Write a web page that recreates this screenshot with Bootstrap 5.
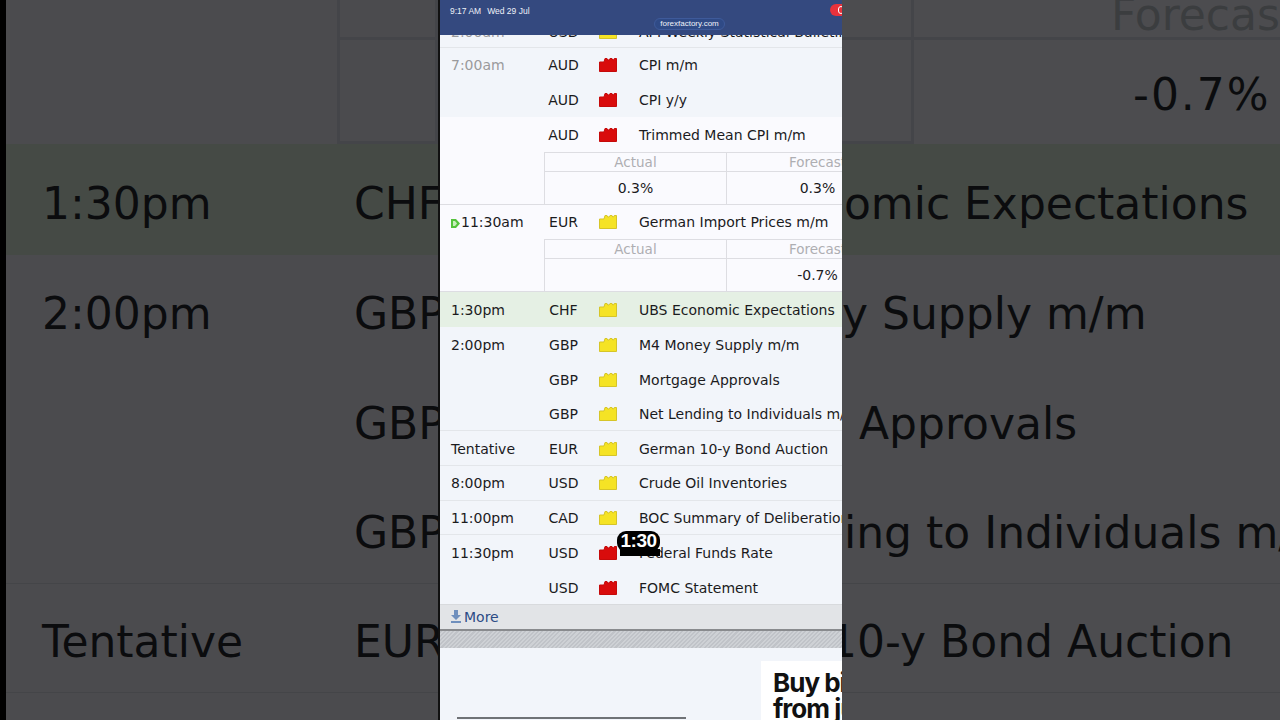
<!DOCTYPE html>
<html lang="en">

<head>
    <meta charset="UTF-8">
    <meta name="viewport" content="width=device-width, initial-scale=1.0">
    <title>Forex Factory calendar</title>
    <link href="https://cdn.jsdelivr.net/npm/bootstrap@5.3.0/dist/css/bootstrap.min.css" rel="stylesheet">
    <style>
        html, body { height: 720px; overflow: hidden; background: #000; }
        body { font-family: "DejaVu Sans", Verdana, sans-serif; }

        .stage { width: 1280px; height: 720px; }

        /* blurred, zoomed copy either side of the phone */
        .side { height: 720px; flex: none; overflow: hidden; background: #4b4b4e; color: #0b0c0e; font-size: 44px; line-height: 1; white-space: nowrap; }
        .side-left { width: 432px; margin-left: 6px; }
        .side-right { width: 438px; background: #4c4c4f; }
        .side-top { height: 144px; }
        .side-row { height: 109.5px; padding-top: 9px; }
        .side-green { height: 111px; padding-top: 9px; background: #454a45; }
        .side-line { border-bottom: 1px solid #444548; }
        .side-cell { border: 3px solid #444549; border-top: 0; flex: none; }
        .side-cell-left { width: 101px; height: 144px; margin-left: 331px; }
        .side-rule { height: 40px; border-bottom: 3px solid #444549; }
        .side-time { width: 348px; padding-left: 36px; flex: none; }
        .side-cell-a { width: 72px; border-left: 0; }
        .side-head { color: #3b3d3f; padding-left: 197px; margin-top: -7px; height: 47px; border-bottom: 3px solid #444549; }
        .side-val { padding-left: 219px; padding-top: 33px; letter-spacing: 2px; }
        .shift-expect { margin-left: -26px; }
        .shift-approv { margin-left: 17px; }
        .shift-lend { margin-left: 2px; }
        .shift-bond { margin-left: -13px; }

        /* phone */
        .phone { width: 404px; height: 720px; flex: none; overflow: hidden; background: #f2f5fa; border-left: 2px solid #111; font-size: 14px; color: #1b1b1d; position: relative; }
        .topbar { height: 35px; background: #34497f; color: #eef1f8; font-family: "Liberation Sans", Arial, sans-serif; font-size: 8.5px; position: absolute; top: 0; left: 0; right: 0; z-index: 2; }
        .status { padding: 5px 0 0 10px; gap: 6px; }
        .rec-pill { position: absolute; top: 4px; left: 390px; width: 24px; height: 12px; border-radius: 6px; background: #e8323c; }
        .rec-pill span { position: absolute; left: 8px; top: 2px; width: 6px; height: 8px; border: 1.5px solid #fff; border-radius: 3px; }
        .url-pill { position: absolute; top: 18px; left: 214px; width: 71px; height: 12px; border-radius: 6px; background: #2f4a86; border: 1px solid #3e5a9a; font-size: 8px; line-height: 10px; text-align: center; }

        .cal-row { height: 34.7px; padding-top: 2px; align-items: center; white-space: nowrap; }
        .cal-first { height: 47.5px; padding-top: 18px; border-bottom: 1px solid #e3e6ea; }
        .cal-white { background: #fafafe; }
        .cal-green { background: #e5f0e4; height: 35px; }
        .cal-ruled { border-bottom: 1px solid #e3e6ea; }
        .col-time { width: 105px; padding-left: 11px; flex: none; }
        .col-cur { width: 37px; flex: none; text-align: center; }
        .col-imp { width: 52px; flex: none; text-align: center; line-height: 0; margin-top: -2px; }
        .col-name { padding-left: 5px; }
        .time-past { color: #9a9a9c; }
        .time-next { position: relative; padding-left: 21px; }
        .next-mark { position: absolute; left: 11px; top: 50%; margin-top: -4px; }

        .impact-red { fill: #d90c0c; stroke: #c50a0a; }
        .impact-yellow { fill: #f5e325; stroke: #d6c528; }

        .detail-wrap { background: #fafafe; padding-left: 104px; height: 53px; border-bottom: 1px solid #dddde2; }
        .detail-box { width: 364px; height: 53px; border: solid #dddde2; border-width: 1.5px 0 0 0; }
        .detail-cell { width: 182px; flex: none; border-left: 1.5px solid #dddde2; text-align: center; }
        .detail-head { height: 19px; line-height: 18px; font-size: 13.5px; color: #aeaeb2; border-bottom: 1.5px solid #dddde2; }
        .detail-val { height: 33px; line-height: 33px; }

        .more-bar { height: 27px; margin-top: -.7px; background: #e2e4e7; border-top: 1px solid #d8dadd; border-bottom: 2px solid #898b8e; padding-left: 11px; color: #2c4b85; line-height: 25px; gap: 3px; }
        .hatch { height: 17px; background: repeating-linear-gradient(135deg, #c0c3c8 0 1.5px, #ced1d5 1.5px 3px); }
        .below { height: 72px; position: relative; }
        .ad-box { position: absolute; left: 321px; top: 13px; width: 90px; height: 70px; background: #fff; padding: 9px 0 0 12px; color: #111; font-family: Inter, "Liberation Sans", sans-serif; font-weight: 700; font-size: 26px; line-height: 25.5px; letter-spacing: -1px; white-space: nowrap; }
        .ad-rule { position: absolute; left: 17px; top: 69px; width: 229px; height: 2px; background: #6f7276; }

        .timer-tag { position: absolute; left: 177px; top: 531px; width: 43px; height: 21px; border-radius: 9px; background: #000; color: #fff; font-family: "Liberation Sans", Arial, sans-serif; font-weight: 700; font-size: 19px; line-height: 20px; letter-spacing: -.5px; text-align: center; z-index: 3; }
        .timer-tag::after { content: ""; position: absolute; left: 3px; top: 18px; width: 40px; height: 7px; background: #000; z-index: -1; }
    </style>
</head>

<body>
    <svg width="0" height="0" class="position-absolute">
        <symbol id="folder" viewBox="0 0 18 15">
            <path d="M.5 5 H5 L6 1.5 H8 L8.7 3 H10 L11 1.5 H13 L13.7 3 H14.5 L15.3 1.5 H17.5 V14.5 H.5 Z"/>
        </symbol>
    </svg>

    <div class="stage d-flex">
        <!-- left side -->
        <div class="side side-left">
            <div class="side-top">
                <div class="side-cell side-cell-left"><div class="side-rule"></div></div>
            </div>
            <div class="side-green d-flex align-items-center"><div class="side-time">1:30pm</div><div>CHF</div></div>
            <div class="side-row d-flex align-items-center"><div class="side-time">2:00pm</div><div>GBP</div></div>
            <div class="side-row d-flex align-items-center"><div class="side-time"></div><div>GBP</div></div>
            <div class="side-row side-line d-flex align-items-center"><div class="side-time"></div><div>GBP</div></div>
            <div class="side-row side-line d-flex align-items-center"><div class="side-time">Tentative</div><div>EUR</div></div>
        </div>

        <!-- phone -->
        <div class="phone">
            <div class="topbar">
                <div class="status d-flex"><span>9:17 AM</span><span>Wed 29 Jul</span></div>
                <div class="rec-pill"><span></span></div>
                <div class="url-pill">forexfactory.com</div>
            </div>

            <div class="cal-row cal-first d-flex">
                <div class="col-time time-past">2:00am</div>
                <div class="col-cur">USD</div>
                <div class="col-imp"><svg width="18" height="15" class="impact-yellow"><use href="#folder"/></svg></div>
                <div class="col-name">API Weekly Statistical Bulletin</div>
            </div>
            <div class="cal-row d-flex">
                <div class="col-time time-past">7:00am</div>
                <div class="col-cur">AUD</div>
                <div class="col-imp"><svg width="18" height="15" class="impact-red"><use href="#folder"/></svg></div>
                <div class="col-name">CPI m/m</div>
            </div>
            <div class="cal-row d-flex">
                <div class="col-time"></div>
                <div class="col-cur">AUD</div>
                <div class="col-imp"><svg width="18" height="15" class="impact-red"><use href="#folder"/></svg></div>
                <div class="col-name">CPI y/y</div>
            </div>
            <div class="cal-row cal-white d-flex">
                <div class="col-time"></div>
                <div class="col-cur">AUD</div>
                <div class="col-imp"><svg width="18" height="15" class="impact-red"><use href="#folder"/></svg></div>
                <div class="col-name">Trimmed Mean CPI m/m</div>
            </div>
            <div class="detail-wrap">
                <div class="detail-box">
                    <div class="d-flex detail-head">
                        <div class="detail-cell">Actual</div>
                        <div class="detail-cell">Forecast</div>
                    </div>
                    <div class="d-flex detail-val">
                        <div class="detail-cell">0.3%</div>
                        <div class="detail-cell">0.3%</div>
                    </div>
                </div>
            </div>
            <div class="cal-row cal-white d-flex">
                <div class="col-time time-next">
                    <svg class="next-mark" width="9" height="9"><path d="M0 0 H5 L9 4.5 L5 9 H0 Z" fill="#55c23d"/><path d="M2 2 H4 L6 4.5 L4 7 H2 Z" fill="#c8eebd"/></svg>
                    11:30am
                </div>
                <div class="col-cur">EUR</div>
                <div class="col-imp"><svg width="18" height="15" class="impact-yellow"><use href="#folder"/></svg></div>
                <div class="col-name">German Import Prices m/m</div>
            </div>
            <div class="detail-wrap">
                <div class="detail-box">
                    <div class="d-flex detail-head">
                        <div class="detail-cell">Actual</div>
                        <div class="detail-cell">Forecast</div>
                    </div>
                    <div class="d-flex detail-val">
                        <div class="detail-cell"></div>
                        <div class="detail-cell">-0.7%</div>
                    </div>
                </div>
            </div>
            <div class="cal-row cal-green d-flex">
                <div class="col-time">1:30pm</div>
                <div class="col-cur">CHF</div>
                <div class="col-imp"><svg width="18" height="15" class="impact-yellow"><use href="#folder"/></svg></div>
                <div class="col-name">UBS Economic Expectations</div>
            </div>
            <div class="cal-row d-flex">
                <div class="col-time">2:00pm</div>
                <div class="col-cur">GBP</div>
                <div class="col-imp"><svg width="18" height="15" class="impact-yellow"><use href="#folder"/></svg></div>
                <div class="col-name">M4 Money Supply m/m</div>
            </div>
            <div class="cal-row d-flex">
                <div class="col-time"></div>
                <div class="col-cur">GBP</div>
                <div class="col-imp"><svg width="18" height="15" class="impact-yellow"><use href="#folder"/></svg></div>
                <div class="col-name">Mortgage Approvals</div>
            </div>
            <div class="cal-row cal-ruled d-flex">
                <div class="col-time"></div>
                <div class="col-cur">GBP</div>
                <div class="col-imp"><svg width="18" height="15" class="impact-yellow"><use href="#folder"/></svg></div>
                <div class="col-name">Net Lending to Individuals m/m</div>
            </div>
            <div class="cal-row cal-ruled d-flex">
                <div class="col-time">Tentative</div>
                <div class="col-cur">EUR</div>
                <div class="col-imp"><svg width="18" height="15" class="impact-yellow"><use href="#folder"/></svg></div>
                <div class="col-name">German 10-y Bond Auction</div>
            </div>
            <div class="cal-row cal-ruled d-flex">
                <div class="col-time">8:00pm</div>
                <div class="col-cur">USD</div>
                <div class="col-imp"><svg width="18" height="15" class="impact-yellow"><use href="#folder"/></svg></div>
                <div class="col-name">Crude Oil Inventories</div>
            </div>
            <div class="cal-row cal-ruled d-flex">
                <div class="col-time">11:00pm</div>
                <div class="col-cur">CAD</div>
                <div class="col-imp"><svg width="18" height="15" class="impact-yellow"><use href="#folder"/></svg></div>
                <div class="col-name">BOC Summary of Deliberations</div>
            </div>
            <div class="cal-row d-flex">
                <div class="col-time">11:30pm</div>
                <div class="col-cur">USD</div>
                <div class="col-imp"><svg width="18" height="15" class="impact-red"><use href="#folder"/></svg></div>
                <div class="col-name">Federal Funds Rate</div>
            </div>
            <div class="cal-row d-flex">
                <div class="col-time"></div>
                <div class="col-cur">USD</div>
                <div class="col-imp"><svg width="18" height="15" class="impact-red"><use href="#folder"/></svg></div>
                <div class="col-name">FOMC Statement</div>
            </div>
            <div class="more-bar d-flex">
                <svg width="10" height="25"><path d="M3 5 H7 V10 H10 L5 15 L0 10 H3 Z M0 16 H10 V18 H0 Z" fill="#6f8fbd"/></svg>
                <span>More</span>
            </div>
            <div class="hatch"></div>
            <div class="below">
                <div class="ad-box">Buy bitcoin<br>from just</div>
                <div class="ad-rule"></div>
            </div>

            <div class="timer-tag">1:30</div>
        </div>

        <!-- right side -->
        <div class="side side-right">
            <div class="side-top d-flex">
                <div class="side-cell side-cell-a"><div class="side-rule"></div></div>
                <div class="flex-grow-1">
                    <div class="side-head">Forecast</div>
                    <div class="side-val">-0.7%</div>
                </div>
            </div>
            <div class="side-green d-flex align-items-center"><div class="shift-expect">nomic Expectations</div></div>
            <div class="side-row d-flex align-items-center"><div>y Supply m/m</div></div>
            <div class="side-row d-flex align-items-center"><div class="shift-approv">Approvals</div></div>
            <div class="side-row side-line d-flex align-items-center"><div class="shift-lend">ing to Individuals m/m</div></div>
            <div class="side-row side-line d-flex align-items-center"><div class="shift-bond">10-y Bond Auction</div></div>
        </div>
    </div>

    <script src="https://cdn.jsdelivr.net/npm/bootstrap@5.3.0/dist/js/bootstrap.bundle.min.js"></script>
</body>

</html>
